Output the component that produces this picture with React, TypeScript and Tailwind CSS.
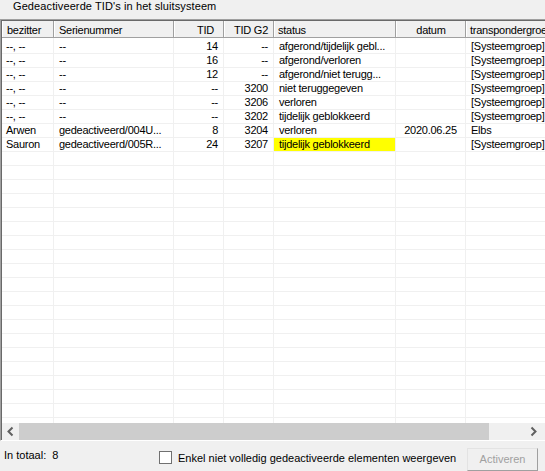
import React from "react";

type Row = {
  b: string;
  s: string;
  tid: string;
  g2: string;
  st: string;
  d: string;
  g: string;
  hl?: boolean;
};

const rows: Row[] = [
  { b: "--, --", s: "--", tid: "14", g2: "--", st: "afgerond/tijdelijk gebl...", d: "", g: "[Systeemgroep]" },
  { b: "--, --", s: "--", tid: "16", g2: "--", st: "afgerond/verloren", d: "", g: "[Systeemgroep]" },
  { b: "--, --", s: "--", tid: "12", g2: "--", st: "afgerond/niet terugg...", d: "", g: "[Systeemgroep]" },
  { b: "--, --", s: "--", tid: "--", g2: "3200", st: "niet teruggegeven", d: "", g: "[Systeemgroep]" },
  { b: "--, --", s: "--", tid: "--", g2: "3206", st: "verloren", d: "", g: "[Systeemgroep]" },
  { b: "--, --", s: "--", tid: "--", g2: "3202", st: "tijdelijk geblokkeerd", d: "", g: "[Systeemgroep]" },
  { b: "Arwen", s: "gedeactiveerd/004U...", tid: "8", g2: "3204", st: "verloren", d: "2020.06.25", g: "Elbs" },
  { b: "Sauron", s: "gedeactiveerd/005R...", tid: "24", g2: "3207", st: "tijdelijk geblokkeerd", d: "", g: "[Systeemgroep]", hl: true },
];

const empty: Row = { b: "", s: "", tid: "", g2: "", st: "", d: "", g: "" };
const allRows: Row[] = [...rows, ...Array.from({ length: 22 }, () => empty)];

const cell = "h-[14px] shrink-0 border-r border-b border-[#f0f0f0] leading-[13px] whitespace-nowrap overflow-hidden";
const hcell = "h-full shrink-0 border-l border-l-white border-r border-r-[#a0a0a0] leading-[13px] pt-[3px] whitespace-nowrap overflow-hidden";

export default function App() {
  return (
    <div className="w-[545px] h-[471px] bg-[#f0f0f0] overflow-hidden flex flex-col text-[11px] text-black font-['Liberation_Sans',Arial,sans-serif]">
      <div className="h-[19px] shrink-0 pl-[13px] leading-[13px] whitespace-nowrap tracking-[0.1px]">
        Gedeactiveerde TID's in het sluitsysteem
      </div>

      <div className="h-[422px] shrink-0 border-t border-l border-[#a0a0a0] border-b border-b-white overflow-hidden tracking-[-0.25px]">
        <div className="h-full border-t border-l border-[#696969] bg-white flex flex-col overflow-hidden">
          {/* header */}
          <div className="h-[17px] shrink-0 flex bg-[#f0f0f0] border-b border-[#a0a0a0]">
            <div className={`${hcell} w-[52px] pl-[4px]`}>bezitter</div>
            <div className={`${hcell} w-[120px] pl-[4px]`}>Serienummer</div>
            <div className={`${hcell} w-[50px] pr-[9px] text-right`}>TID</div>
            <div className={`${hcell} w-[50px] pr-[5px] text-right`}>TID G2</div>
            <div className={`${hcell} w-[122px] pl-[3px]`}>status</div>
            <div className={`${hcell} w-[70px] text-center`}>datum</div>
            <div className={`${hcell} w-[100px] pl-[3px]`}>transpondergroep</div>
          </div>

          {/* body */}
          <div className="flex-1 overflow-hidden">
            <div className="flex h-[2px]">
              <div className="w-[52px] shrink-0 border-r border-[#f0f0f0]" />
              <div className="w-[120px] shrink-0 border-r border-[#f0f0f0]" />
              <div className="w-[50px] shrink-0 border-r border-[#f0f0f0]" />
              <div className="w-[50px] shrink-0 border-r border-[#f0f0f0]" />
              <div className="w-[122px] shrink-0 border-r border-[#f0f0f0]" />
              <div className="w-[70px] shrink-0 border-r border-[#f0f0f0]" />
              <div className="w-[100px] shrink-0 border-r border-[#f0f0f0]" />
            </div>
            {allRows.map((r, i) => (
              <div key={i} className="flex">
                <div className={`${cell} w-[52px] pl-[4px]`}>{r.b}</div>
                <div className={`${cell} w-[120px] pl-[5px]`}>{r.s}</div>
                <div className={`${cell} w-[50px] pr-[5px] text-right`}>{r.tid}</div>
                <div className={`${cell} w-[50px] pr-[5px] text-right`}>{r.g2}</div>
                <div className={`${cell} w-[122px] pl-[5px] ${r.hl ? "bg-[#ffff00]" : ""}`}>{r.st}</div>
                <div className={`${cell} w-[70px] text-center`}>{r.d}</div>
                <div className={`${cell} w-[100px] pl-[5px]`}>{r.g}</div>
              </div>
            ))}
          </div>

          {/* horizontal scrollbar */}
          <div className="h-[17px] shrink-0 flex bg-[#f0f0f0]">
            <div className="w-[17px] h-full shrink-0 flex items-center justify-center">
              <svg width="17" height="17" viewBox="0 0 17 17">
                <polyline points="10.5,4.5 6.5,8.5 10.5,12.5" fill="none" stroke="#606060" strokeWidth="2" />
              </svg>
            </div>
            <div className="w-[470px] h-full shrink-0 bg-[#cdcdcd]" />
            <div className="flex-1" />
            <div className="w-[17px] h-full shrink-0 flex items-center justify-center">
              <svg width="17" height="17" viewBox="0 0 17 17">
                <polyline points="6.5,4.5 10.5,8.5 6.5,12.5" fill="none" stroke="#606060" strokeWidth="2" />
              </svg>
            </div>
            <div className="w-[3px] shrink-0" />
          </div>
        </div>
      </div>

      {/* bottom bar */}
      <div className="flex-1 flex items-start pl-[4px] pr-[7px]">
        <div className="w-[155px] shrink-0 mt-[8px] leading-[13px] whitespace-pre">In totaal:  8</div>
        <div className="w-[13px] h-[13px] shrink-0 mt-[10px] border border-[#707070] bg-white" />
        <div className="ml-[6px] mt-[11px] leading-[13px] whitespace-nowrap">
          Enkel niet volledig gedeactiveerde elementen weergeven
        </div>
        <div className="ml-auto mt-[7px] w-[71px] h-[23px] shrink-0 border border-t-[#e3e3e3] border-l-[#e3e3e3] border-r-[#a0a0a0] border-b-[#a0a0a0] bg-[#f0f0f0] flex items-center justify-center text-[#a0a0a0] leading-[13px]">
          Activeren
        </div>
      </div>
    </div>
  );
}
